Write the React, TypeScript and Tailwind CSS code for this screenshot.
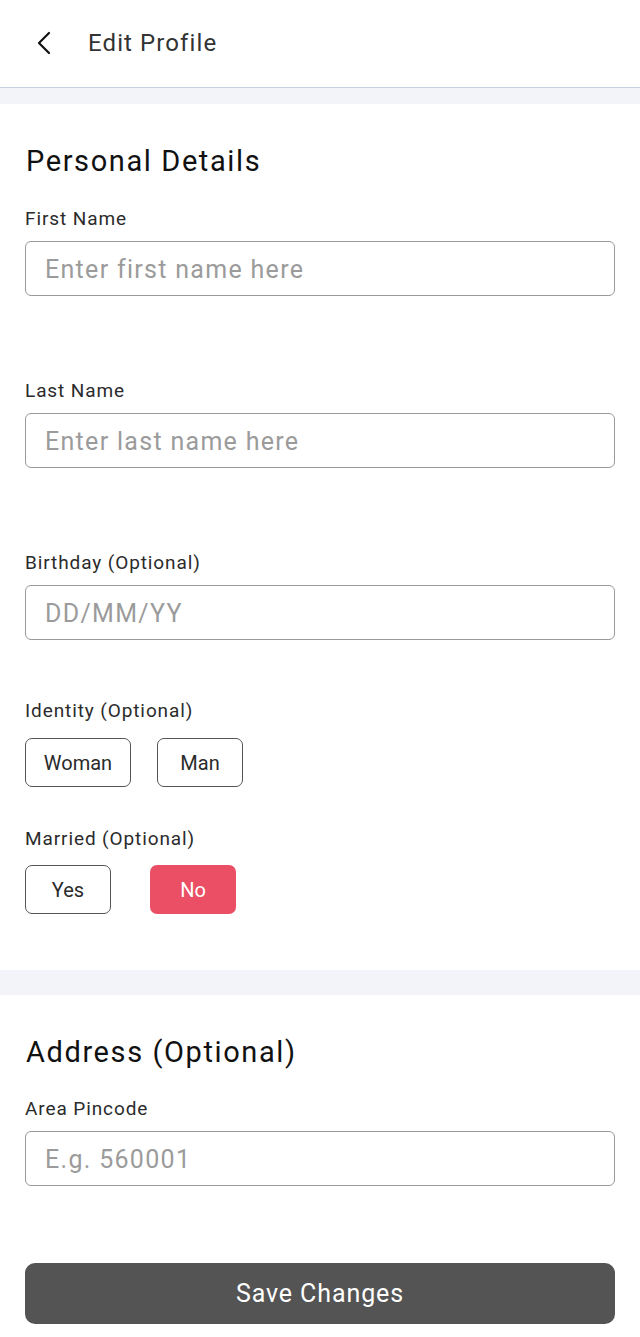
import React from "react";

const font = { fontFamily: "Roboto, 'Noto Sans', sans-serif" };

function Field({ label, placeholder, className = "" }: { label: string; placeholder: string; className?: string }) {
  return (
    <div className={className}>
      <div className="text-[19px] leading-[24px] text-[#2b2b2b] tracking-[0.9px]">{label}</div>
      <div className="mt-[10px] h-[55px] rounded-[6px] border border-[#9a9a9a] flex items-center pl-[19px]">
        <span className="text-[25px] text-[#9b9b9b] tracking-[1.3px] mt-[3px]">{placeholder}</span>
      </div>
    </div>
  );
}

function Chip({ label, active = false, w }: { label: string; active?: boolean; w: string }) {
  return (
    <div
      className={
        "h-[49px] rounded-[7px] flex items-center justify-center text-[20px] " +
        w +
        (active ? " bg-[#ea4f66] text-white" : " border border-[#555] text-[#2b2b2b]")
      }
    >
      {label}
    </div>
  );
}

export default function App() {
  return (
    <div className="w-[640px] h-[1337px] bg-white overflow-hidden" style={font}>
      <header className="h-[88px] border-b border-[#c9d0e0] flex items-center">
        <svg width="16" height="24" viewBox="0 0 16 24" className="ml-[36px] mt-[-2px]" fill="none">
          <path d="M13 2 L3 12 L13 22" stroke="#111" strokeWidth="2.2" strokeLinecap="round" strokeLinejoin="round" />
        </svg>
        <span className="ml-[36px] text-[24px] text-[#333] mt-[-2px] tracking-[1.1px]">Edit Profile</span>
      </header>
      <div className="h-[16px] bg-[#f2f4f9]" />
      <section className="px-[25px] pt-[39px] pb-[56px]">
        <h2 className="text-[29px] leading-[36px] text-[#111] pl-[1px] tracking-[1.6px]">Personal Details</h2>
        <Field label="First Name" placeholder="Enter first name here" className="mt-[28px]" />
        <Field label="Last Name" placeholder="Enter last name here" className="mt-[83px]" />
        <Field label="Birthday (Optional)" placeholder="DD/MM/YY" className="mt-[83px]" />
        <div className="mt-[59px]">
          <div className="text-[19px] leading-[24px] text-[#2b2b2b] tracking-[0.9px]">Identity (Optional)</div>
          <div className="mt-[15px] flex gap-[26px]">
            <Chip label="Woman" w="w-[106px]" />
            <Chip label="Man" w="w-[86px]" />
          </div>
        </div>
        <div className="mt-[40px]">
          <div className="text-[19px] leading-[24px] text-[#2b2b2b] tracking-[0.9px]">Married (Optional)</div>
          <div className="mt-[14px] flex gap-[39px]">
            <Chip label="Yes" w="w-[86px]" />
            <Chip label="No" w="w-[86px]" active />
          </div>
        </div>
      </section>
      <div className="h-[25px] bg-[#f2f4f9]" />
      <section className="px-[25px] pt-[39px]">
        <h2 className="text-[29px] leading-[36px] text-[#111] pl-[1px] tracking-[1.6px]">Address (Optional)</h2>
        <Field label="Area Pincode" placeholder="E.g. 560001" className="mt-[27px]" />
        <button className="mt-[77px] w-full h-[61px] rounded-[10px] bg-[#545454] text-white text-[25px] tracking-[0.9px] flex items-center justify-center">
          Save Changes
        </button>
      </section>
    </div>
  );
}
